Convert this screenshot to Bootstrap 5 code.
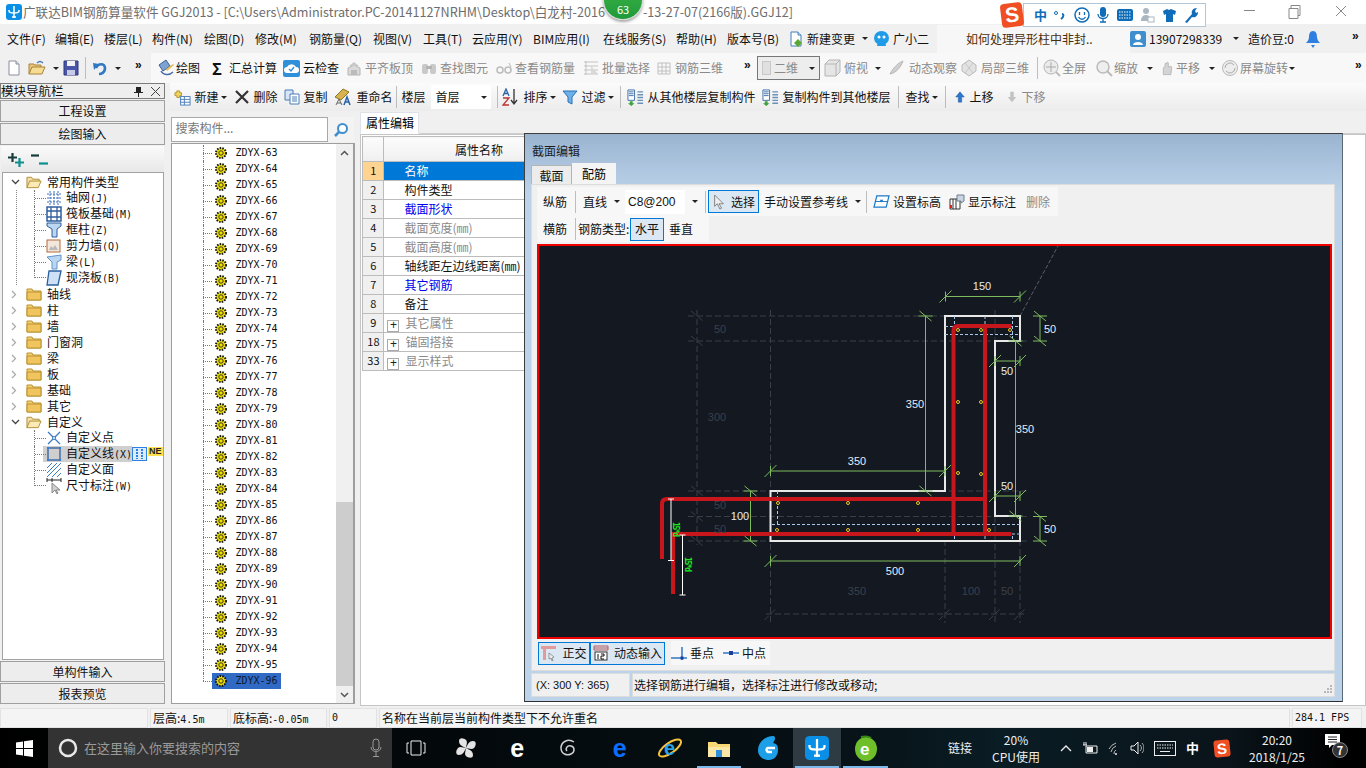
<!DOCTYPE html>
<html lang="zh">
<head>
<meta charset="UTF-8">
<title>广联达BIM钢筋算量软件 GGJ2013</title>
<link href="https://cdn.jsdelivr.net/npm/bootstrap@5.3.0/dist/css/bootstrap.min.css" rel="stylesheet">
<style>
body { font-family: "Noto Sans CJK SC", sans-serif; font-size: 12px; line-height: 16px; background: #f0f0f0; color: #111; width: 1366px; height: 768px; overflow: hidden; }
svg { display: block; flex: none; }
.ic { width: 16px; height: 16px; }
.ascii { font-family: "DejaVu Sans Mono", "Noto Sans CJK SC", monospace; font-size: 10px; }
.off { color: #8a8a8a; }
.caret { width: 0; height: 0; border: 3px solid transparent; border-top: 3px solid #222; border-bottom: 0; flex: none; }
.vsep { width: 1px; height: 22px; background: #bdbdbd; }

.title-bar { height: 24px; background: #fff; color: #6d6d6d; font-size: 12.6px; padding-left: 23px; white-space: nowrap; }
.title-rest { left: 643px; white-space: nowrap; font-size: 12.6px; }
.app-logo { left: 6px; top: 4px; }
.win-btns { left: 1240px; top: 0; width: 126px; height: 24px; }
.green-badge { left: 603px; top: -20px; width: 40px; height: 40px; border-radius: 50%; background: linear-gradient(#41b649, #1f9a3a); border: 1px solid #cfd6cf; box-shadow: 0 2px 3px rgba(0,0,0,.35); color: #fff; font-size: 11px; padding-top: 20px; text-align: center; }
.sogou { left: 1001px; top: 3px; }
.sogou-s { width: 22px; height: 24px; background: #ef4f23; color: #fff; font: 800 21px/23px "Liberation Sans", sans-serif; text-align: center; border-radius: 4px; transform: rotate(-7deg); }
.sogou-bar { width: 183px; height: 24px; background: #fff; border: 1px solid #b2c6d6; padding: 0 7px 0 10px; color: #0f6cb8; font-weight: 700; font-size: 13px; }

.menu-bar { height: 29px; display: grid; grid-template-columns: 48px 49px 48px 52px 51px 54px 64px 50px 49px 61px 70px 73px 51px 61px 85px 64px 193px 118px 58px 46px 14px; padding-left: 7px; align-items: center; white-space: nowrap; }
.menu-ask { background: #f7f7f7; height: 28px; padding-left: 29px; line-height: 28px; color: #4a2e0a; }
.more-mark { font: 700 12px/12px "Liberation Sans", sans-serif; letter-spacing: -1px; align-self: start; margin-top: 6px; }

.tool-bar { height: 30px; display: grid; grid-template-columns: 22px 35px 22px 7px 43px 22px 51px 75px 63px 75px 75px 87px 73px 88px 13px 66px 65px 72px 77px 6px 52px 65px 61px 134px 11px; padding-left: 6px; align-items: center; white-space: nowrap; background: linear-gradient(90deg, #f0f0f0 151px, #f8f8f8 151px); }
.tool-item { display: flex; align-items: center; gap: 3px; }
.tool-tight { gap: 1px; }
.dim-box { width: 63px; height: 24px; border: 1px solid #777; background: #ededed; padding: 0 4px; }
.dim-swatch { width: 15px; height: 14px; background: #e0e0e0; border: 1px solid #c8c8c8; display: block; }

.main-area { height: 624px; }
.nav-col { width: 166px; }
.nav-head { height: 16px; border: 1px solid #7c7c7c; background: #eeeeee; font-size: 12.5px; line-height: 14px; white-space: nowrap; margin-bottom: 1px; }
.nav-btn { height: 22px; width: 165px; border: 1px solid #a0a0a0; border-radius: 0; background: #ededed; font-size: 12px; line-height: 20px; padding: 0; color: #111; margin-bottom: 1px; display: block; }
.nav-btn-low { height: 21px; }
.nav-tools { height: 26px; margin: 0 1px; background: linear-gradient(#fafafa, #e8e8e8); padding: 6px 0 0 6px; gap: 6px; }
.tree-box { height: 488px; border: 1px solid #a3a3a3; margin: 0 1px 1px 2px; background: #fff; padding-top: 1px; }
.t-row { height: 16px; display: flex; align-items: center; white-space: nowrap; }
.t-chev { width: 23px; padding-left: 8px; }
.t-fold { margin-right: 5px; }
.t-ind { width: 31px; height: 16px; flex: none; }
.t-ind.lined { background: repeating-linear-gradient(#888 0 1px, transparent 1px 2px) 13px 0 / 1px 100% no-repeat; }
.t-link { width: 12px; height: 16px; flex: none; border-left: 1px dotted #777; position: relative; }
.t-link::after { content: ""; position: absolute; left: 0; right: 0; top: 8px; border-top: 1px dotted #777; }
.t-link.end { height: 8px; align-self: flex-start; }
.t-link.end::after { top: 7px; }
.t-sel { background: #cfcfcf; margin-left: -3px; padding-left: 3px; }
.t-name { margin-left: 4px; }
.new-tag { font: 700 9px/9px "Liberation Sans", sans-serif; background: #ffe14d; color: #222; padding: 0 1px; margin-top: -5px; }

.work-col { width: 1200px; margin-left: 5px; }
.sub-bar { height: 28px; background: linear-gradient(#fbfbfb, #ececec); display: grid; grid-template-columns: 60px 50px 50px 62px 5px 30px 66px 5px 60px 58px 7px 135px 136px 7px 40px 9px 52px 100px; padding-left: 4px; align-items: center; white-space: nowrap; }
.sub-floor { background: #fff; width: 60px; height: 24px; padding: 0 4px; line-height: 24px; justify-content: space-between; display: flex; align-items: center; }
.work-body { height: 596px; }
.tree-col { width: 185px; padding: 6px 0 0 1px; }
.search-row { height: 25px; margin-bottom: 1px; }
.search-row .form-control { width: 157px; height: 25px; border-radius: 0; font-size: 12px; padding: 0 3px 4px; border-color: #a8a8a8; color: #777; }
.search-row .form-control::placeholder { color: #777; }
.search-go { width: 26px; height: 25px; background: #f3f3f3; }
.list-frame { height: 561px; border: 1px solid #9e9e9e; background: #fff; border-right-width: 2px; overflow: hidden; }
.list-rows { width: 164px; padding-top: 1px; }
.z-row { height: 16px; display: flex; align-items: center; padding-left: 31px; position: relative; }
.z-row::before { content: ""; position: absolute; left: 31px; top: 0; bottom: 0; border-left: 1px dotted #777; }
.z-row:last-child::before { bottom: 8px; }
.z-link { width: 9px; border-top: 1px dotted #777; flex: none; }
.z-cell { height: 16px; padding: 0 3px; display: flex; align-items: center; gap: 8px; font-family: "DejaVu Sans Mono", monospace; font-size: 10px; }
.z-sel { background: #316ac5; color: #0d1a33; width: 69px; }
.scroll-bar { width: 17px; background: #f0f0f0; }
.scroll-end { height: 17px; display: flex; justify-content: center; align-items: center; }
.scroll-space { flex: 1 1 auto; }
.scroll-thumb { height: 184px; background: #cdcdcd; }

.prop-col { flex: 1 1 auto; padding-left: 5px; padding-top: 1px; }
.prop-tabs { height: 22px; border-bottom: 1px solid #cfcfcf; }
.nav-tabs .prop-tab { height: 22px; width: 59px; border: 1px solid #cfcfcf; border-bottom-color: #fff; border-radius: 0; background: #fff; color: #111; padding: 2px 0; text-align: center; font-size: 12px; margin: 0; }
.prop-page { height: 572px; background: #fff; border: 1px solid #c5c5c5; padding: 1px 0 0 1px; overflow: hidden; }
.table.prop-grid { width: 212px; font-size: 12px; margin: 0; border-color: #bcbcbc; }
.table.prop-grid>:not(caption)>*>* { padding: 0; height: 19px; line-height: 17px; border-color: #bcbcbc; background: #fff; white-space: nowrap; color: #111; box-shadow: none; }
.table.prop-grid>thead>tr>th { height: 25px; background: linear-gradient(#fcfcfc, #efefef); text-align: center; font-weight: 400; line-height: 23px; }
.table.prop-grid>tbody>tr>.row-no { width: 21px; background: #f0f0f0; text-align: center; font-size: 11px; }
.table.prop-grid>tbody>tr>.row-no.hot { background: #ffd390; }
.table.prop-grid>tbody>tr>td.row-name { padding-left: 20px; }
.table.prop-grid>tbody>tr>td.is-sel { background: #0078d7; color: #fff; }
.table.prop-grid>tbody>tr>td.is-link { color: #0000ee; }
.table.prop-grid>tbody>tr>td.is-off { color: #8a8a8a; }
.table.prop-grid>tbody>tr>td.is-group { padding-left: 3px; color: #8a8a8a; }
.plus-box { display: inline-block; width: 12px; height: 12px; border: 1px solid #aaa; font: 12px/9px "Liberation Sans", sans-serif; text-align: center; color: #222; margin-right: 6px; vertical-align: -1px; }

.sec-dlg { left: 524px; top: 50px; width: 819px; height: 569px; border: 1px solid #3e3e3e; border-right-color: #5c6a78; border-bottom-color: #2f2f2f; background: linear-gradient(#9ab4d0, #bcd2ea 60px, #bdd3ea); padding: 0 7px 0 6px; }
.dlg-title { height: 29px; padding: 9px 0 0 1px; line-height: 16px; color: #1c1c1c; }
.dlg-tabs { height: 21px; border: 0; gap: 0; align-items: flex-end; }
.nav-tabs .dlg-tab { border: 1px solid #b5b5b5; border-bottom: 0; border-radius: 0; padding: 2px 0; background: #ececec; color: #111; height: 19px; width: 41px; text-align: center; font-size: 12px; margin: 0; }
.nav-tabs .dlg-tab.active { background: #f4f4f4; height: 21px; width: 44px; border-color: #f4f4f4; }
.dlg-panel { height: 487px; background: #f0f0f0; border: 1px solid #dcdcdc; padding: 2px 2px 0 5px; }
.dlg-bar { height: 29px; display: grid; grid-template-columns: 32px 8px 42px 80px 3px 56px 102px 7px 76px 77px 27px; background: #f7f7f7; padding-left: 6px; align-items: center; width: 521px; white-space: nowrap; }
.dlg-bar2 { height: 26px; display: grid; grid-template-columns: 32px 3px 52px 39px 40px; background: #f7f7f7; padding-left: 6px; align-items: center; width: 172px; margin-bottom: 2px; white-space: nowrap; }
.dlg-select { background: #fff; width: 60px; height: 24px; display: flex; align-items: center; padding-left: 3px; font: 12px "Liberation Sans", sans-serif; }
.dlg-select-wrap { display: flex; align-items: center; gap: 7px; }
.is-on { border: 1px solid #0078d7; background: #dbe8f4; height: 23px; display: flex; align-items: center; justify-content: center; gap: 5px; }
.is-on-pick { width: 51px; }
.is-on-flat { width: 34px; }
.cad-view { width: 795px; height: 395px; border: 2px solid #f00000; background: #141821; overflow: hidden; }
.dlg-bar3 { height: 26px; display: grid; grid-template-columns: 52px 75px 6px 52px 47px; padding: 2px 0 0 1px; align-items: center; width: 232px; white-space: nowrap; }
.dlg-bar3 .tool-item { background: #f7f7f7; height: 24px; }
.dlg-status { height: 24px; margin-top: 2px; gap: 2px; position: relative; }
.dlg-status > div { background: #f0f0f0; border: 1px solid #dcdcdc; padding: 3px 1px 0 4px; height: 24px; }
.dlg-status > .stat-msg { width: 703px; padding-left: 1px; }
.stat-xy { width: 99px; font: 11px "Liberation Sans", sans-serif; line-height: 16px; }
.stat-grip { right: 3px; bottom: 3px; }

.status-bar { height: 21px; background: #f0f0f0; gap: 2px; padding-top: 1px; white-space: nowrap; }
.status-bar > div { border: 1px solid #e2e2e2; height: 20px; padding: 1px 2px; background: #f4f4f4; }
.s1 { width: 148px; } .s2 { width: 78px; } .s3 { width: 97px; } .s4 { width: 48px; } .s5 { width: 911px; } .s6 { width: 70px; }

.task-bar { height: 40px; background: linear-gradient(90deg, #000 0, #061014 800px, #0a1c24 1000px, #0a141a 1230px, #000 1340px); color: #eee; }
.win-cell { width: 48px; }
.ask-box { width: 344px; height: 40px; background: #333; color: #9a9a9a; padding: 0 10px; font-size: 13px; gap: 6px; }
.task-strip { display: grid; grid-template-columns: 48.5px 51.5px 50.5px 51.5px 51.5px 49px 48.5px 50px 48px 49px; width: 498px; }
.task-cell { height: 40px; display: flex; justify-content: center; align-items: center; position: relative; }
.task-cell.on { background: #2e3b43; }
.task-cell.run::after { content: ""; position: absolute; left: 2px; right: 2px; bottom: 0; height: 2px; background: #7cb8ea; }
.tb-glyph { font: 700 25px/25px "Liberation Sans", sans-serif; }
.tray { display: grid; grid-template-columns: 38px 74px 22px 26px 22px 24px 32px 28px 28px 83px 41px; padding-left: 58px; width: 476px; height: 40px; align-items: center; }
.tray-txt { font-size: 12px; color: #eee; text-align: center; white-space: nowrap; }
.tray-link { text-align: left; }
.tray-cpu, .tray-clock { line-height: 17px; }
.tray-cpu { width: 60px; }
.tray-clock { width: 70px; }
.tray-ime { font-size: 13px; font-weight: 700; color: #fff; }
.tray-s { width: 16px; height: 17px; background: #ef4f23; color: #fff; border-radius: 3px; font: 800 15px/17px "Liberation Sans", sans-serif; text-align: center; transform: rotate(-6deg); }
.tray-note { position: relative; height: 28px; }
.tray-count { position: absolute; left: 7px; top: 8px; width: 16px; height: 16px; background: #333; border: 1px solid #888; border-radius: 50%; color: #fff; font-weight: 700; font-size: 11px; line-height: 14px; text-align: center; }
</style>
</head>
<body>

<svg width="0" height="0" class="position-absolute">
  <symbol id="i-doc" viewBox="0 0 16 16"><path d="M3 1h7l3 3v11H3z" fill="#fff" stroke="#8a8f98"/><path d="M10 1v3h3" fill="#dfe3ea" stroke="#8a8f98"/></symbol>
  <symbol id="i-change" viewBox="0 0 16 16"><path d="M3 1h7l3 3v11H3z" fill="#fff" stroke="#3f7fc0"/><path d="M10 1v3h3" fill="#dfe9f5" stroke="#3f7fc0"/><path d="M10 8l4 4-4 4-4-4z" fill="#5aa832"/></symbol>
  <symbol id="i-open" viewBox="0 0 18 16"><path d="M1 14V4h5l1 1h6v2" fill="#e7c67a" stroke="#a9843a"/><path d="M1 14l3-7h13l-3 7z" fill="#f6dc93" stroke="#a9843a"/><path d="M9 3c2-2 4-2 6 0" fill="none" stroke="#4a7db8" stroke-width="1.4"/></symbol>
  <symbol id="i-save" viewBox="0 0 16 16"><path d="M1 1h14v14H1z" fill="#4b55a8" stroke="#2f3679"/><path d="M4 1h8v5H4z" fill="#f2f2f2"/><path d="M4 10h8v5H4z" fill="#c6cbe8"/></symbol>
  <symbol id="i-undo" viewBox="0 0 16 16"><path d="M4 8C6 3 13 3 13 8s-4 6-6 6" fill="none" stroke="#2f78c4" stroke-width="2.6"/><path d="M1 3l6 1-5 6z" fill="#2f78c4"/></symbol>
  <symbol id="i-draw" viewBox="0 0 18 18"><path d="M2 6l7-5 4 6-7 5z" fill="#7ca3d4" stroke="#3c5e92"/><path d="M4 12c2 4 8 5 12 1" fill="none" stroke="#4a6ea6" stroke-width="1.5"/><path d="M9 10l7-5 1 1-7 6z" fill="#e3b94f"/></symbol>
  <symbol id="i-cloud" viewBox="0 0 17 17"><rect width="17" height="17" rx="2" fill="#2f8fd8"/><path d="M4 13a3 3 0 0 1 0-6 5 5 0 0 1 9 0 3 3 0 0 1 0 6z" fill="#fff"/><path d="M6 9l2 2 3-4" fill="none" stroke="#2f8fd8" stroke-width="1.4"/></symbol>
  <symbol id="i-plate" viewBox="0 0 16 16"><path d="M2 15V8l6-3 6 3v7z" fill="#d9d9d9" stroke="#b4b4b4"/><path d="M8 2l5 4H3z" fill="#c8c8c8"/><path d="M5 10h6v5H5z" fill="#bbb"/></symbol>
  <symbol id="i-find" viewBox="0 0 16 16"><rect x="1" y="4" width="6" height="10" rx="2" fill="#c9c9c9"/><rect x="9" y="4" width="6" height="10" rx="2" fill="#c9c9c9"/><rect x="5" y="6" width="6" height="3" fill="#b4b4b4"/></symbol>
  <symbol id="i-look" viewBox="0 0 16 16"><path d="M1 10a3 3 0 1 0 6 0 3 3 0 1 0-6 0zM9 10a3 3 0 1 0 6 0 3 3 0 1 0-6 0z" fill="none" stroke="#bbb" stroke-width="1.5"/><path d="M13 3l2 4" stroke="#bbb"/></symbol>
  <symbol id="i-batch" viewBox="0 0 16 16"><path d="M1 2h14M1 6h14M1 10h14M1 14h14M3 1v14" stroke="#c3c3c3" fill="none"/><path d="M8 6l7 8H8z" fill="#d8d8d8"/></symbol>
  <symbol id="i-grid3" viewBox="0 0 16 16"><path d="M2 3h12v11H2zM6 3v11M10 3v11M2 7h12M2 11h12" fill="none" stroke="#c0c0c0"/></symbol>
  <symbol id="i-top" viewBox="0 0 18 18"><path d="M2 5l4-4h11v12l-4 4H2z" fill="#e5e5e5" stroke="#b5b5b5"/><path d="M2 5h11v12M13 5l4-4" fill="none" stroke="#b5b5b5"/></symbol>
  <symbol id="i-orbit" viewBox="0 0 18 18"><path d="M2 15c3-6 8-11 13-13-2 6-7 12-13 13z" fill="#cfcfcf" stroke="#b8b8b8"/></symbol>
  <symbol id="i-part" viewBox="0 0 18 18"><path d="M9 1l7 5v6l-7 5-7-5V6z" fill="#e2e2e2" stroke="#bbb"/><path d="M5 4l8 10M13 4L5 14" stroke="#c8c8c8"/></symbol>
  <symbol id="i-full" viewBox="0 0 18 18"><circle cx="8" cy="8" r="7" fill="#ececec" stroke="#b5b5b5"/><path d="M8 3v10M3 8h10" stroke="#aaa"/><path d="M13 13l4 4" stroke="#bbb" stroke-width="2"/></symbol>
  <symbol id="i-zoom" viewBox="0 0 18 18"><circle cx="8" cy="8" r="6" fill="#eee" stroke="#bbb" stroke-width="1.5"/><path d="M12 12l5 5" stroke="#bbb" stroke-width="2"/></symbol>
  <symbol id="i-pan" viewBox="0 0 18 18"><path d="M4 17V9c0-1 1-1 2-1V4c0-1 2-1 2 0V3c0-1 2-1 2 0v5l3-1c1 0 1 1 1 2l-1 8z" fill="#d4d4d4" stroke="#b5b5b5"/></symbol>
  <symbol id="i-rot" viewBox="0 0 18 18"><circle cx="9" cy="9" r="7.5" fill="#ededed" stroke="#bbb"/><path d="M4 9a5 5 0 0 1 9-3M14 9a5 5 0 0 1-9 3" fill="none" stroke="#aaa"/></symbol>
  <symbol id="i-new" viewBox="0 0 18 18"><path d="M3 2h3v2h2v3H6v2H3V7H1V4h2z" fill="#f2d45b" stroke="#b2952a"/><rect x="7" y="8" width="10" height="9" fill="#fff" stroke="#4a7db8"/><path d="M7 11h10M7 14h10M11 8v9" stroke="#4a7db8"/></symbol>
  <symbol id="i-x" viewBox="0 0 16 16"><path d="M2 2l12 12M14 2L2 14" stroke="#333" stroke-width="2.2"/></symbol>
  <symbol id="i-copy" viewBox="0 0 16 16"><path d="M1 1h8v10H1z" fill="#d9e5f4" stroke="#4a7db8"/><path d="M6 5h9v10H6z" fill="#fff" stroke="#4a7db8"/><path d="M8 8h5M8 10h5M8 12h5" stroke="#4a7db8"/></symbol>
  <symbol id="i-filter" viewBox="0 0 16 16"><path d="M1 2h14L10 8v7l-4-2V8z" fill="#6db1e8" stroke="#2a72b8"/></symbol>
  <symbol id="i-cp1" viewBox="0 0 18 18"><path d="M1 1h7v11H1z" fill="#fff" stroke="#3c6ea8"/><path d="M2 3h5M2 5h5M2 7h5" stroke="#3c6ea8"/><path d="M3 13h3v2h2l-3.500 3L1 15h2z" fill="#3fa23f"/><path d="M11 3h6M11 6h6M11 9h6M11 12h6M11 15h6" stroke="#6a8fb8" stroke-width="1.5"/></symbol>
  <symbol id="i-up" viewBox="0 0 14 14"><path d="M7 1l5 6H9v6H5V7H2z" fill="#2f78d0" stroke="#1d518f" stroke-width=".5"/></symbol>
  <symbol id="i-down" viewBox="0 0 14 14"><path d="M7 13l5-6H9V1H5v6H2z" fill="#c2c2c2"/></symbol>
  <symbol id="i-zd" viewBox="0 0 12 12"><circle cx="6" cy="6" r="5" fill="#f0e000"/><circle cx="6" cy="6" r="5" fill="none" stroke="#111" stroke-dasharray="1.500 1.200" stroke-width="2"/><circle cx="6" cy="6" r="2.200" fill="#f0e000" stroke="#333"/></symbol>
  <symbol id="i-folder" viewBox="0 0 16 14"><path d="M1 13V2h5l1 2h8v9z" fill="#f5d06e" stroke="#b89130"/><path d="M1 5h14v8H1z" fill="#f0c55f" stroke="#b89130"/></symbol>
  <symbol id="i-folder-o" viewBox="0 0 17 14"><path d="M1 13V2h5l1 2h7v2" fill="#f3dfa7" stroke="#b08c33"/><path d="M1 13l3-7h12l-3 7z" fill="#fbe9b8" stroke="#b08c33"/></symbol>
  <symbol id="i-axis" viewBox="0 0 16 16"><path d="M1 4h14M1 8h14M1 12h14M4 1v14M8 1v14M12 1v14" stroke="#3c6eb4" stroke-dasharray="2 1" fill="none"/></symbol>
  <symbol id="i-raft" viewBox="0 0 16 16"><rect x="1" y="1" width="14" height="14" fill="#fff" stroke="#2f5f9f" stroke-width="1.500"/><path d="M1 5h14M1 11h14M5 1v14M11 1v14" stroke="#2f5f9f" stroke-width="1.300"/></symbol>
  <symbol id="i-col" viewBox="0 0 16 16"><path d="M1 1h14v3L11 7v8H6V7L1 4z" fill="#bcd6f1" stroke="#2b5f9e"/></symbol>
  <symbol id="i-wall" viewBox="0 0 16 16"><rect x="1" y="2" width="13" height="12" fill="#f3e6da" stroke="#b46a3a"/><path d="M3 12l2-4 2 2 2-3 3 5z" fill="#b9b9b9"/></symbol>
  <symbol id="i-beam" viewBox="0 0 16 16"><path d="M1 3l14-2v5l-4 2v7H6V8z" fill="#bcd6f1" stroke="#5e95cc"/></symbol>
  <symbol id="i-slab" viewBox="0 0 16 16"><path d="M3 1h12l-3 14H1z" fill="#cde0f6" stroke="#2b5f9e" stroke-width="1.300"/></symbol>
  <symbol id="i-cp" viewBox="0 0 16 16"><path d="M2 2l12 12M14 2L2 14" stroke="#3c7cc0" stroke-width="1.300"/><circle cx="8" cy="8" r="1.500" fill="#fff" stroke="#3c7cc0"/></symbol>
  <symbol id="i-cl" viewBox="0 0 16 16"><rect x="2" y="2" width="12" height="12" fill="none" stroke="#2f5f9f" stroke-width="1.300"/><path d="M1 1h2v2H1zM13 1h2v2h-2zM1 13h2v2H1zM13 13h2v2h-2z" fill="#2f7fe0"/></symbol>
  <symbol id="i-cs" viewBox="0 0 16 16"><path d="M1 6l5-5M1 11L11 1M1 15L15 1M6 15l9-9M11 15l4-4" stroke="#3c7cc0" fill="none"/></symbol>
  <symbol id="i-dim" viewBox="0 0 16 16"><path d="M1 2h14M1 0v4M6 0v4M15 0v4" stroke="#222" fill="none"/><path d="M6 5v10l3-3 2 4 1-1-2-3h4z" fill="#d0d0d0" stroke="#888"/></symbol>
  <symbol id="i-cursor" viewBox="0 0 16 18"><path d="M3 1v13l3-3 3 6 2-1-3-5h5z" fill="#eee" stroke="#777"/></symbol>
  <symbol id="i-level" viewBox="0 0 18 16"><path d="M4 2h13l-3 12H1z" fill="#fff" stroke="#1a78c8" stroke-width="1.300"/><path d="M2 8h14" stroke="#1a78c8"/><path d="M7 6l4 0-2 3z" fill="#1a78c8"/></symbol>
  <symbol id="i-mark" viewBox="0 0 16 16"><path d="M1 5h10v10H1z" fill="#fff" stroke="#333"/><path d="M4 5v10M7 5v10" stroke="#333"/><path d="M8 1h7v6l-3 2V7H8z" fill="#c9d6e2" stroke="#6d7f8e"/><path d="M1 11h2v3H1z" fill="#d22"/></symbol>
  <symbol id="i-ortho" viewBox="0 0 16 16"><path d="M0 1h15v3H5v11H2V4H0z" fill="#e39a9a"/><path d="M8 8l5 4-2 1 1 3-1 0-1-3-2 1z" fill="#eee" stroke="#666" stroke-width=".6"/></symbol>
  <symbol id="i-perp" viewBox="0 0 16 16"><path d="M0 13h16" stroke="#2f78c4" stroke-width="1.500"/><path d="M11 2v13" stroke="#2f78c4" stroke-width="1.500"/><rect x="9.500" y="11.500" width="3" height="3" fill="#1d3f9a"/></symbol>
  <symbol id="i-mid" viewBox="0 0 16 16"><path d="M0 8h16" stroke="#2f78c4" stroke-width="1.500"/><rect x="6" y="6" width="4" height="4" fill="#1d3f9a"/></symbol>
  <symbol id="i-logo" viewBox="0 0 16 16"><rect width="16" height="16" rx="3" fill="#0a8fe6"/><path d="M8 2v12M6 13h4M3 6v1c0 2 2 2 5 2s5 0 5-2V6" fill="none" stroke="#fff" stroke-width="1.500"/></symbol>
</svg>

<!-- title bar -->
<div class="title-bar position-relative d-flex align-items-center">
  <span>广联达BIM钢筋算量软件 GGJ2013 - [C:\Users\Administrator.PC-20141127NRHM\Desktop\白龙村-2016</span>
  <span class="position-absolute title-rest">-13-27-07(2166版).GGJ12]</span>
  <svg class="ic position-absolute app-logo"><use href="#i-logo"/></svg>
  <div class="position-absolute green-badge">63</div>
  <svg class="position-absolute win-btns" viewBox="0 0 126 24"><path d="M4 10.500h11" stroke="#888"/><path d="M49 8.500h9v10h-9zM51 8.500v-3h9v10h-2" fill="none" stroke="#888"/><path d="M96 6l10 10M106 6L96 16" stroke="#888"/></svg>
  <div class="position-absolute sogou d-flex">
    <div class="sogou-s">S</div>
    <div class="sogou-bar d-flex align-items-center justify-content-between">
      <span>中</span>
      <svg width="14" height="14" viewBox="0 0 14 14"><circle cx="3" cy="5" r="1.500" fill="none" stroke="#0f6cb8"/><path d="M9 6c2 0 2 3-1 5" fill="none" stroke="#0f6cb8" stroke-width="2"/></svg>
      <svg width="16" height="16" viewBox="0 0 16 16"><circle cx="8" cy="8" r="7" fill="#fff" stroke="#0f6cb8" stroke-width="1.500"/><path d="M5.500 5v3M10.500 5v3M4.500 10c2 3 5 3 7 0" fill="none" stroke="#0f6cb8" stroke-width="1.300"/></svg>
      <svg width="14" height="18" viewBox="0 0 14 18"><rect x="4" y="1" width="6" height="10" rx="3" fill="#0f6cb8"/><path d="M2 8c0 6 10 6 10 0M7 13v3M4 16h6" fill="none" stroke="#0f6cb8" stroke-width="1.300"/></svg>
      <svg width="16" height="14" viewBox="0 0 16 14"><rect x="0" y="1" width="16" height="12" rx="2" fill="#0f6cb8"/><path d="M2 4h12M2 7h12M2 10h12" stroke="#fff" stroke-dasharray="1.500 1" /></svg>
      <svg width="16" height="18" viewBox="0 0 16 18"><circle cx="7" cy="5" r="3" fill="#a9b7c2"/><path d="M2 15c0-5 3-6 5-6s4 1 4 3v3z" fill="#a9b7c2"/><rect x="9" y="11" width="6" height="5" fill="#fff" stroke="#a9b7c2"/></svg>
      <svg width="15" height="15" viewBox="0 0 15 15"><path d="M1 3l4-2 2 1 2-1 5 2-1 4-2-1v8H4V6L2 7z" fill="#0f6cb8"/></svg>
      <svg width="15" height="16" viewBox="0 0 15 16"><path d="M2 15L9 7c-1-3 1-6 5-6l-2 3 1 2 2-1c0 4-3 6-6 5l-5 6z" fill="#0f6cb8"/></svg>
    </div>
  </div>
</div>

<!-- menu bar -->
<div class="menu-bar">
  <span>文件(F)</span><span>编辑(E)</span><span>楼层(L)</span><span>构件(N)</span><span>绘图(D)</span><span>修改(M)</span><span>钢筋量(Q)</span><span>视图(V)</span><span>工具(T)</span><span>云应用(Y)</span><span>BIM应用(I)</span><span>在线服务(S)</span><span>帮助(H)</span><span>版本号(B)</span>
  <div class="tool-item"><svg class="ic"><use href="#i-change"/></svg><span>新建变更</span><i class="caret ms-1"></i></div>
  <div class="tool-item"><svg width="17" height="17" viewBox="0 0 17 17"><ellipse cx="8.500" cy="8" rx="7.500" ry="7" fill="#1f9be8"/><circle cx="6" cy="7" r="1.500" fill="#fff"/><circle cx="11" cy="7" r="1.500" fill="#fff"/><path d="M5 11c2 2 5 2 7 0l1 5H4z" fill="#1f9be8"/></svg><span>广小二</span></div>
  <div class="menu-ask">如何处理异形柱中非封..</div>
  <div class="tool-item"><svg class="ic" viewBox="0 0 16 16"><rect width="16" height="16" rx="2" fill="#3f8fce"/><circle cx="8" cy="6" r="3" fill="#fff"/><path d="M3 14c0-4 10-4 10 0z" fill="#fff"/></svg><span>13907298339</span><i class="caret ms-2"></i></div>
  <span>造价豆:0</span>
  <svg width="14" height="18" viewBox="0 0 14 18"><path d="M7 1c3 0 4 3 4 6 0 3 2 5 3 6H0c1-1 3-3 3-6 0-3 1-6 4-6z" fill="#2f7fe0"/><path d="M5 15h4l-2 3z" fill="#2f7fe0"/></svg>
  <span class="more-mark">»</span>
</div>

<!-- main toolbar -->
<div class="tool-bar">
  <svg class="ic"><use href="#i-doc"/></svg>
  <div class="tool-item"><svg width="18" height="16"><use href="#i-open"/></svg><i class="caret ms-1"></i></div>
  <svg class="ic"><use href="#i-save"/></svg>
  <i class="vsep"></i>
  <div class="tool-item"><svg class="ic"><use href="#i-undo"/></svg><i class="caret ms-1"></i></div>
  <span class="more-mark">»</span>
  <div class="tool-item tool-tight"><svg width="18" height="18"><use href="#i-draw"/></svg><span>绘图</span></div>
  <div class="tool-item"><b class="fs-6 me-1 ms-1">Σ</b><span>汇总计算</span></div>
  <div class="tool-item"><svg width="17" height="17"><use href="#i-cloud"/></svg><span>云检查</span></div>
  <div class="tool-item off"><svg class="ic"><use href="#i-plate"/></svg><span>平齐板顶</span></div>
  <div class="tool-item off"><svg class="ic"><use href="#i-find"/></svg><span>查找图元</span></div>
  <div class="tool-item off"><svg class="ic"><use href="#i-look"/></svg><span>查看钢筋量</span></div>
  <div class="tool-item off"><svg class="ic"><use href="#i-batch"/></svg><span>批量选择</span></div>
  <div class="tool-item off"><svg class="ic"><use href="#i-grid3"/></svg><span>钢筋三维</span></div>
  <span class="more-mark">»</span>
  <div class="tool-item dim-box off"><i class="dim-swatch"></i><span>二维</span><i class="caret ms-2"></i></div>
  <div class="tool-item off"><svg width="18" height="18"><use href="#i-top"/></svg><span>俯视</span><i class="caret ms-1"></i></div>
  <div class="tool-item off"><svg width="18" height="18"><use href="#i-orbit"/></svg><span>动态观察</span></div>
  <div class="tool-item off"><svg width="18" height="18"><use href="#i-part"/></svg><span>局部三维</span></div>
  <i class="vsep"></i>
  <div class="tool-item tool-tight off"><svg width="18" height="18"><use href="#i-full"/></svg><span>全屏</span></div>
  <div class="tool-item tool-tight off"><svg width="18" height="18"><use href="#i-zoom"/></svg><span>缩放</span><i class="caret ms-2"></i></div>
  <div class="tool-item tool-tight off"><svg width="15" height="18"><use href="#i-pan"/></svg><span>平移</span><i class="caret ms-2"></i></div>
  <div class="tool-item tool-tight off"><svg width="18" height="18"><use href="#i-rot"/></svg><span>屏幕旋转</span><i class="caret"></i></div>
  <span class="more-mark">»</span>
</div>

<!-- main area -->
<div class="main-area d-flex position-relative">
  <div class="nav-col">
    <div class="nav-head d-flex justify-content-between align-items-center">
      <span>模块导航栏</span>
      <span class="d-flex align-items-center gap-2 pe-1">
        <svg width="9" height="11" viewBox="0 0 9 11"><path d="M2 1h5v5h2v1H5v4H4V7H0V6h2z" fill="#222"/></svg>
        <svg width="9" height="9" viewBox="0 0 9 9"><path d="M0 0l9 9M9 0L0 9" stroke="#444"/></svg>
      </span>
    </div>
    <button class="btn nav-btn">工程设置</button>
    <button class="btn nav-btn">绘图输入</button>
    <div class="nav-tools d-flex">
      <svg width="18" height="16" viewBox="0 0 18 16"><path d="M5.500 1v9M1 5.500h9" stroke="#173c3c" stroke-width="2.200"/><path d="M12.500 6v9M8 10.500h9" stroke="#0c8f8f" stroke-width="2.200"/></svg>
      <svg width="18" height="16" viewBox="0 0 18 16"><path d="M0 3.500h8" stroke="#173c3c" stroke-width="2.200"/><path d="M8 11.500h9" stroke="#0c8f8f" stroke-width="2.200"/></svg>
    </div>
    <div class="tree-box" id="navTree"></div>
    <button class="btn nav-btn nav-btn-low">单构件输入</button>
    <button class="btn nav-btn nav-btn-low">报表预览</button>
  </div>

  <div class="work-col">
    <div class="sub-bar">
      <div class="tool-item"><svg width="17" height="17"><use href="#i-new"/></svg><span>新建</span><i class="caret"></i></div>
      <div class="tool-item"><svg class="ic"><use href="#i-x"/></svg><span>删除</span></div>
      <div class="tool-item"><svg class="ic"><use href="#i-copy"/></svg><span>复制</span></div>
      <div class="tool-item"><svg width="19" height="18" viewBox="0 0 19 18"><path d="M1 9l8-8 6 3-8 8z" fill="#d8b24f" stroke="#8d7420"/><path d="M2 17l3-6 3 6M3 15h4" fill="none" stroke="#666"/><path d="M10 17l3-8 3 8M11.500 14h3.500" fill="none" stroke="#2a62aa" stroke-width="1.500"/></svg><span>重命名</span></div>
      <i class="vsep"></i>
      <span>楼层</span>
      <div class="sub-floor"><span>首层</span><i class="caret"></i></div>
      <i class="vsep"></i>
      <div class="tool-item"><svg width="18" height="18" viewBox="0 0 18 18"><path d="M1 8l3-7 3 7M2 5.500h4" fill="none" stroke="#2a62aa" stroke-width="1.300"/><path d="M1 10h6l-6 7h6" fill="none" stroke="#b33" stroke-width="1.300"/><path d="M12 1v14M9 12l3 4 3-4" fill="none" stroke="#333" stroke-width="1.300"/></svg><span>排序</span><i class="caret"></i></div>
      <div class="tool-item"><svg class="ic"><use href="#i-filter"/></svg><span>过滤</span><i class="caret"></i></div>
      <i class="vsep"></i>
      <div class="tool-item"><svg width="17" height="17"><use href="#i-cp1"/></svg><span>从其他楼层复制构件</span></div>
      <div class="tool-item"><svg width="17" height="17"><use href="#i-cp1"/></svg><span>复制构件到其他楼层</span></div>
      <i class="vsep"></i>
      <div class="tool-item"><span>查找</span><i class="caret"></i></div>
      <i class="vsep"></i>
      <div class="tool-item"><svg width="12" height="12"><use href="#i-up"/></svg><span>上移</span></div>
      <div class="tool-item off"><svg width="12" height="12"><use href="#i-down"/></svg><span>下移</span></div>
    </div>
    <div class="work-body d-flex">
      <div class="tree-col">
        <div class="search-row d-flex">
          <input class="form-control" placeholder="搜索构件...">
          <div class="search-go d-flex align-items-center justify-content-center">
            <svg width="16" height="16" viewBox="0 0 16 16"><circle cx="9.500" cy="6.500" r="4.500" fill="#fff" stroke="#3f8fce" stroke-width="2"/><path d="M6 10l-4 4" stroke="#3f8fce" stroke-width="2.500"/></svg>
          </div>
        </div>
        <div class="list-frame d-flex">
          <div class="list-rows" id="zdyxList"></div>
          <div class="scroll-bar d-flex flex-column">
            <div class="scroll-end"><svg width="9" height="6" viewBox="0 0 9 6"><path d="M1 5l3.500-3.500L8 5" fill="none" stroke="#555" stroke-width="1.500"/></svg></div>
            <div class="scroll-space"></div>
            <div class="scroll-thumb"></div>
            <div class="scroll-end"><svg width="9" height="6" viewBox="0 0 9 6"><path d="M1 1l3.500 3.500L8 1" fill="none" stroke="#555" stroke-width="1.500"/></svg></div>
          </div>
        </div>
      </div>
      <div class="prop-col">
        <ul class="nav nav-tabs prop-tabs">
          <li class="nav-item"><button class="nav-link prop-tab active" type="button">属性编辑</button></li>
        </ul>
        <div class="prop-page">
          <table class="table table-bordered prop-grid">
            <thead><tr><th class="row-no"></th><th>属性名称</th></tr></thead>
            <tbody>
              <tr><td class="row-no hot">1</td><td class="row-name is-sel">名称</td></tr>
              <tr><td class="row-no">2</td><td class="row-name">构件类型</td></tr>
              <tr><td class="row-no">3</td><td class="row-name is-link">截面形状</td></tr>
              <tr><td class="row-no">4</td><td class="row-name is-off">截面宽度(㎜)</td></tr>
              <tr><td class="row-no">5</td><td class="row-name is-off">截面高度(㎜)</td></tr>
              <tr><td class="row-no">6</td><td class="row-name">轴线距左边线距离(㎜)</td></tr>
              <tr><td class="row-no">7</td><td class="row-name is-link">其它钢筋</td></tr>
              <tr><td class="row-no">8</td><td class="row-name">备注</td></tr>
              <tr><td class="row-no">9</td><td class="is-group"><span class="plus-box">+</span>其它属性</td></tr>
              <tr><td class="row-no">18</td><td class="is-group"><span class="plus-box">+</span>锚固搭接</td></tr>
              <tr><td class="row-no">33</td><td class="is-group"><span class="plus-box">+</span>显示样式</td></tr>
            </tbody>
          </table>
        </div>
      </div>
    </div>
  </div>

  <!-- section editor window -->
  <div class="sec-dlg position-absolute">
    <div class="dlg-title">截面编辑</div>
    <ul class="nav nav-tabs dlg-tabs">
      <li class="nav-item"><button class="nav-link dlg-tab" type="button">截面</button></li>
      <li class="nav-item"><button class="nav-link dlg-tab active" type="button">配筋</button></li>
    </ul>
    <div class="dlg-panel">
      <div class="dlg-bar">
        <span>纵筋</span><i class="vsep"></i>
        <div class="tool-item"><span>直线</span><i class="caret ms-1"></i></div>
        <div class="dlg-select-wrap"><div class="dlg-select">C8@200</div><i class="caret"></i></div>
        <i class="vsep"></i>
        <div class="is-on is-on-pick"><svg width="14" height="16"><use href="#i-cursor"/></svg><span>选择</span></div>
        <div class="tool-item"><span>手动设置参考线</span><i class="caret ms-1"></i></div>
        <i class="vsep"></i>
        <div class="tool-item"><svg width="17" height="15"><use href="#i-level"/></svg><span>设置标高</span></div>
        <div class="tool-item"><svg class="ic"><use href="#i-mark"/></svg><span>显示标注</span></div>
        <span class="off">删除</span>
      </div>
      <div class="dlg-bar2">
        <span>横筋</span><i class="vsep"></i>
        <span>钢筋类型:</span>
        <div class="is-on is-on-flat">水平</div>
        <span>垂直</span>
      </div>
      <div class="cad-view">
        <svg width="791" height="391" viewBox="539 246 791 391" id="cadSvg" font-family="Liberation Sans, sans-serif" font-size="11"></svg>
      </div>
      <div class="dlg-bar3">
        <div class="is-on"><svg class="ic"><use href="#i-ortho"/></svg><span>正交</span></div>
        <div class="is-on"><svg class="ic" viewBox="0 0 16 16"><path d="M1 1h14v4H1z" fill="none" stroke="#b35a5a"/><path d="M1 3h14" stroke="#b35a5a"/><rect x="2" y="7" width="12" height="8" fill="#fff" stroke="#333"/><path d="M5 9v5M8 9h3v2H8v3h3" fill="none" stroke="#111"/></svg><span>动态输入</span></div>
        <span></span>
        <div class="tool-item"><svg class="ic"><use href="#i-perp"/></svg><span>垂点</span></div>
        <div class="tool-item"><svg class="ic"><use href="#i-mid"/></svg><span>中点</span></div>
      </div>
    </div>
    <div class="dlg-status d-flex">
      <div class="stat-xy">(X: 300 Y: 365)</div>
      <div class="stat-msg">选择钢筋进行编辑，选择标注进行修改或移动;</div>
      <svg class="position-absolute stat-grip" width="10" height="10" viewBox="0 0 10 10"><path d="M8 1h2v2H8zM8 4h2v2H8zM5 4h2v2H5zM8 7h2v2H8zM5 7h2v2H5zM2 7h2v2H2z" fill="#b8b8b8"/></svg>
    </div>
  </div>
</div>

<!-- status bar -->
<div class="status-bar d-flex">
  <div class="s1"></div>
  <div class="s2">层高:<span class="ascii">4.5m</span></div>
  <div class="s3">底标高:<span class="ascii">-0.05m</span></div>
  <div class="s4 ascii">0</div>
  <div class="s5">名称在当前层当前构件类型下不允许重名</div>
  <div class="s6 ascii">284.1 FPS</div>
</div>

<!-- windows taskbar -->
<div class="task-bar d-flex">
  <div class="win-cell d-flex align-items-center justify-content-center">
    <svg width="17" height="17" viewBox="0 0 17 17"><path d="M0 2.500l7-1v6.500H0zM8 1.300L17 0v8H8zM0 9h7v6.500l-7-1zM8 9h9v8l-9-1.300z" fill="#fff"/></svg>
  </div>
  <div class="ask-box d-flex align-items-center">
    <svg width="20" height="20" viewBox="0 0 20 20"><circle cx="10" cy="10" r="8" fill="none" stroke="#e8e8e8" stroke-width="2.500"/></svg>
    <span class="flex-grow-1">在这里输入你要搜索的内容</span>
    <svg width="12" height="20" viewBox="0 0 12 20"><rect x="3" y="1" width="6" height="11" rx="3" fill="none" stroke="#999"/><path d="M1 9c0 6 10 6 10 0M6 14v4M3 18.500h6" fill="none" stroke="#999"/></svg>
  </div>
  <div class="task-strip">
    <div class="task-cell"><svg width="20" height="16" viewBox="0 0 20 16"><path d="M5 1h10v14H5zM3 3H1v10h2M17 3h2v10h-2" fill="none" stroke="#eee"/></svg></div>
    <div class="task-cell"><svg width="22" height="22" viewBox="0 0 22 22"><path d="M11 11C7 9 4 8 4 4s5-3 7-1 0 6 0 8zM11 11c2-4 3-7 7-7s3 5 1 7-6 0-8 0zM11 11c4 2 7 3 7 7s-5 3-7 1 0-6 0-8zM11 11c-2 4-3 7-7 7s-3-5-1-7 6 0 8 0z" fill="#e4e4e4"/></svg></div>
    <div class="task-cell"><span class="tb-glyph text-white">e</span></div>
    <div class="task-cell"><svg width="20" height="20" viewBox="0 0 20 20"><path d="M16 4C10 0 3 4 3 10s6 8 10 6 4-7 0-8-6 3-4 5" fill="none" stroke="#cfcfcf" stroke-width="1.500"/></svg></div>
    <div class="task-cell"><span class="tb-glyph text-primary">e</span></div>
    <div class="task-cell"><svg width="26" height="26" viewBox="0 0 26 26"><ellipse cx="13" cy="13" rx="13" ry="5" transform="rotate(-35 13 13)" fill="none" stroke="#f5c33b" stroke-width="2"/><text x="7" y="20" font-family="Liberation Sans" font-size="20" font-weight="700" fill="#28a2e8">e</text></svg></div>
    <div class="task-cell run"><svg width="24" height="20" viewBox="0 0 24 20"><path d="M1 4h8l2 2h12v13H1z" fill="#f8d775"/><path d="M1 9h22v10H1z" fill="#fbe7a6"/><path d="M9 12h6v7H9z" fill="#2f8fd8"/></svg></div>
    <div class="task-cell"><svg width="26" height="28" viewBox="0 0 26 28"><path d="M19 2C9 2 3 9 3 16c0 7 6 10 11 10s9-4 9-10-2-6-5-7c2-3 3-5 1-7z" fill="#1d9fe8"/><path d="M20 14h-7c-2 0-2 4 1 4h3" fill="none" stroke="#fff" stroke-width="2.500"/></svg></div>
    <div class="task-cell on run"><svg width="24" height="24"><use href="#i-logo"/></svg></div>
    <div class="task-cell run"><svg width="24" height="26" viewBox="0 0 24 26"><ellipse cx="12" cy="14" rx="11" ry="12" fill="#6fbf2a"/><path d="M7 2c4-1 7-1 10 1" stroke="#3a8a16" fill="none" stroke-width="2"/><text x="6" y="20" font-family="Liberation Sans" font-size="17" font-weight="700" fill="#fff">e</text></svg></div>
  </div>
  <div class="tray">
    <div class="tray-txt tray-link">链接</div>
    <div class="tray-txt tray-cpu"><div>20%</div><div>CPU使用</div></div>
    <svg width="12" height="8" viewBox="0 0 12 8"><path d="M1 7l5-5 5 5" fill="none" stroke="#eee" stroke-width="1.300"/></svg>
    <svg width="16" height="14" viewBox="0 0 16 14"><path d="M4 5h11v7H4z" fill="none" stroke="#eee"/><path d="M5 6h6v5H5z" fill="#eee"/><path d="M2 1v3M4 1v3M1 4h4" stroke="#eee"/></svg>
    <svg width="15" height="15" viewBox="0 0 15 15"><path d="M1 8a12 12 0 0 1 7-6M3 11a8 8 0 0 1 5-6M6 13a4 4 0 0 1 2-4" fill="none" stroke="#bbb"/><circle cx="8" cy="13" r="1" fill="#eee"/></svg>
    <svg width="14" height="14" viewBox="0 0 14 14"><path d="M1 5h3l4-4v12L4 9H1z" fill="none" stroke="#eee"/><path d="M10 4c2 2 2 4 0 6M12 2c2.500 3 2.500 7 0 10" fill="none" stroke="#aaa"/></svg>
    <svg width="22" height="15" viewBox="0 0 22 15"><rect x=".5" y=".5" width="21" height="14" fill="none" stroke="#eee"/><path d="M3 4h16M3 7h16" stroke="#eee" stroke-dasharray="1.500 1"/><path d="M6 10.500h10" stroke="#eee"/></svg>
    <span class="tray-ime">中</span>
    <div class="tray-s">S</div>
    <div class="tray-txt tray-clock"><div>20:20</div><div>2018/1/25</div></div>
    <div class="tray-note">
      <svg width="15" height="15" viewBox="0 0 15 15"><path d="M0 0h15v11H7l-3 3v-3H0z" fill="#fff"/><path d="M3 3h9M3 5.500h9M3 8h9" stroke="#222"/></svg>
      <span class="tray-count">7</span>
    </div>
  </div>
</div>

<script>
// left tree: kind (o open folder, f folder, c child, s selected child, e last child), icon, name, key
const nav = [
  ["o", "", "常用构件类型"],
  ["c", "i-axis", "轴网", "(J)"], ["c", "i-raft", "筏板基础", "(M)"], ["c", "i-col", "框柱", "(Z)"], ["c", "i-wall", "剪力墙", "(Q)"], ["c", "i-beam", "梁", "(L)"], ["e", "i-slab", "现浇板", "(B)"],
  ["f", "", "轴线"], ["f", "", "柱"], ["f", "", "墙"], ["f", "", "门窗洞"], ["f", "", "梁"], ["f", "", "板"], ["f", "", "基础"], ["f", "", "其它"],
  ["o", "", "自定义"],
  ["c", "i-cp", "自定义点", ""], ["s", "i-cl", "自定义线", "(X)"], ["c", "i-cs", "自定义面", ""], ["e", "i-dim", "尺寸标注", "(W)"]
];
const chev = {
  o: '<svg width="9" height="6" viewBox="0 0 9 6"><path d="M1 1l3.500 3.500L8 1" fill="none" stroke="#444" stroke-width="1.300"/></svg>',
  f: '<svg width="6" height="9" viewBox="0 0 6 9"><path d="M1 1l3.500 3.500L1 8" fill="none" stroke="#aaa" stroke-width="1.300"/></svg>'
};
document.getElementById("navTree").innerHTML = nav.map((n, idx) => {
  if (n[0] === "o" || n[0] === "f") {
    const ic = n[0] === "o" ? "i-folder-o" : "i-folder";
    return `<div class="t-row"><span class="t-chev">${chev[n[0]]}</span><svg width="16" height="14" class="t-fold"><use href="#${ic}"/></svg><span>${n[2]}</span></div>`;
  }
  const end = n[0] === "e" ? " end" : "";
  const sel = n[0] === "s";
  const lined = idx <= 6 ? " lined" : "";
  const inner = `<svg class="ic"><use href="#${n[1]}"/></svg><span class="t-name">${n[2]}<span class="ascii">${n[3]}</span></span>`;
  const tag = sel ? '<svg width="16" height="14" viewBox="0 0 16 14"><rect x=".5" y=".5" width="14" height="13" fill="#dcecff" stroke="#2f7fe0"/><path d="M5 2v10M10 2v10" stroke="#2f7fe0" stroke-width="2" stroke-dasharray="2 1"/></svg><span class="new-tag">NE</span>' : "";
  return `<div class="t-row"><span class="t-ind${lined}"></span><span class="t-link${end}"></span>${sel ? `<span class="t-row t-sel">${inner}</span>${tag}` : inner}</div>`;
}).join("");

// component list
let rows = "";
for (let i = 63; i <= 96; i++) {
  const sel = i === 96 ? " z-sel" : "";
  rows += `<div class="z-row"><span class="z-link"></span><span class="z-cell${sel}"><svg width="12" height="12"><use href="#i-zd"/></svg>ZDYX-${i}</span></div>`;
}
document.getElementById("zdyxList").innerHTML = rows;

// reinforcement drawing, in page coordinates
const ln = (x1, y1, x2, y2) => `M${x1} ${y1}L${x2} ${y2}`;
const gray = [], green = [];
[[688,316,945],[688,341,1030],[688,491,1030],[688,516.500,1030],[688,541,1030]].forEach(a => gray.push(ln(a[0], a[1], a[2], a[1])));
[[697,310,545],[770.500,310,623],[945,540,623],[995,310,623],[1020,540,623]].forEach(a => gray.push(ln(a[0], a[1], a[0], a[2])));
gray.push(ln(766, 614, 1024, 614));
[770.500,945,995,1020].forEach(x => gray.push(ln(x - 6, 620, x + 6, 608)));
[316,341,491,516.500,541].forEach(y => gray.push(ln(691, y - 5, 703, y + 5)));

const dimH = (x1, x2, y) => { green.push(ln(x1, y, x2, y)); [x1, x2].forEach(x => green.push(ln(x - 6, y + 6, x + 6, y - 6), ln(x, y - 5, x, y + 5))); };
const dimV = (x, y1, y2) => { green.push(ln(x, y1, x, y2)); [y1, y2].forEach(y => green.push(ln(x - 6, y - 5, x + 6, y + 5), ln(x - 7, y, x + 7, y))); };
dimH(945.500, 1020, 296.500);
dimH(770.500, 945, 471);
dimH(770.500, 1020, 561);
dimH(995, 1020, 361);
dimH(995, 1020, 496);
dimV(925.500, 316, 491);
dimV(1015.500, 341, 516);
dimV(1040, 316, 341);
dimV(1040, 516.500, 541);
dimV(750.500, 491, 541);

const dots = [[954,240],[1023,240],[1110,240],[954,456],[1023,456],[954,669],[1023,672],[414,759],[624,759],[834,759],[411,840],[624,840],[834,840],[1047,840]]
  .map(d => `<circle cx="${640 + d[0] / 3}" cy="${250 + d[1] / 3}" r="1.500" fill="#141821" stroke="#f2c81e"/>`).join("");
const lbl = (x, y, t, c) => `<text x="${x}" y="${y}" fill="${c}" text-anchor="middle">${t}</text>`;
const grayTxt = [[720,333,"50"],[717,421,"300"],[720,509,"50"],[720,533,"50"],[857,595,"350"],[971,595,"100"],[1007,595,"50"]];
const whiteTxt = [[982,290,"150"],[915,408,"350"],[1025,433,"350"],[1007,375,"50"],[1007,490,"50"],[1050,333,"50"],[1050,533,"50"],[857,465,"350"],[740,520,"100"],[895,575,"500"]];

document.getElementById("cadSvg").innerHTML = `
  <path d="${gray.join("")}" stroke="#3a3f47" stroke-dasharray="6 3" fill="none"/>
  <path d="M1020 316L1058 246" stroke="#5a5f66" stroke-dasharray="4 2" fill="none"/>
  <path d="M945 316H1020V341H995V516H1020V541H770.500V491H945z" fill="none" stroke="#e8e8e8" stroke-width="2"/>
  <path d="M945 326.500H1020M945 334.500H1020M772 524.500H1020M1012 534H1020M954.500 316V341M985 316V326M1012.500 316V341M777.500 491V524M954.500 536V541M985 536V541M1012.500 536V541" stroke="#a7c8ea" stroke-dasharray="3 2" fill="none"/>
  <path d="${green.join("")}" stroke="#7dbb5c" fill="none"/>
  <path d="M1011.500 326H958Q953.500 326 953.500 331V534M985 326V534M985 499H667Q662 499 662 504V559M1011.500 534H673V594" stroke="#c8161d" stroke-width="4" fill="none"/>
  ${dots}
  <path d="M671 499V560M668 499H674M668 560.500H674M682.500 535V595M679.500 535H685.500M679.500 595H685.500" stroke="#fff" fill="none"/>
  <text transform="translate(672.500 522) rotate(90)" font-family="DejaVu Sans Mono, monospace" font-size="8" font-weight="700" fill="#1eea1e" textLength="15">15*d</text>
  <text transform="translate(684.500 557) rotate(90)" font-family="DejaVu Sans Mono, monospace" font-size="8" font-weight="700" fill="#1eea1e" textLength="15">15*d</text>
  ${grayTxt.map(t => lbl(t[0], t[1], t[2], "#3c4149")).join("")}
  ${whiteTxt.map(t => lbl(t[0], t[1], t[2], "#e4edf5")).join("")}`;
</script>
<script src="https://cdn.jsdelivr.net/npm/bootstrap@5.3.0/dist/js/bootstrap.bundle.min.js"></script>
</body>
</html>
